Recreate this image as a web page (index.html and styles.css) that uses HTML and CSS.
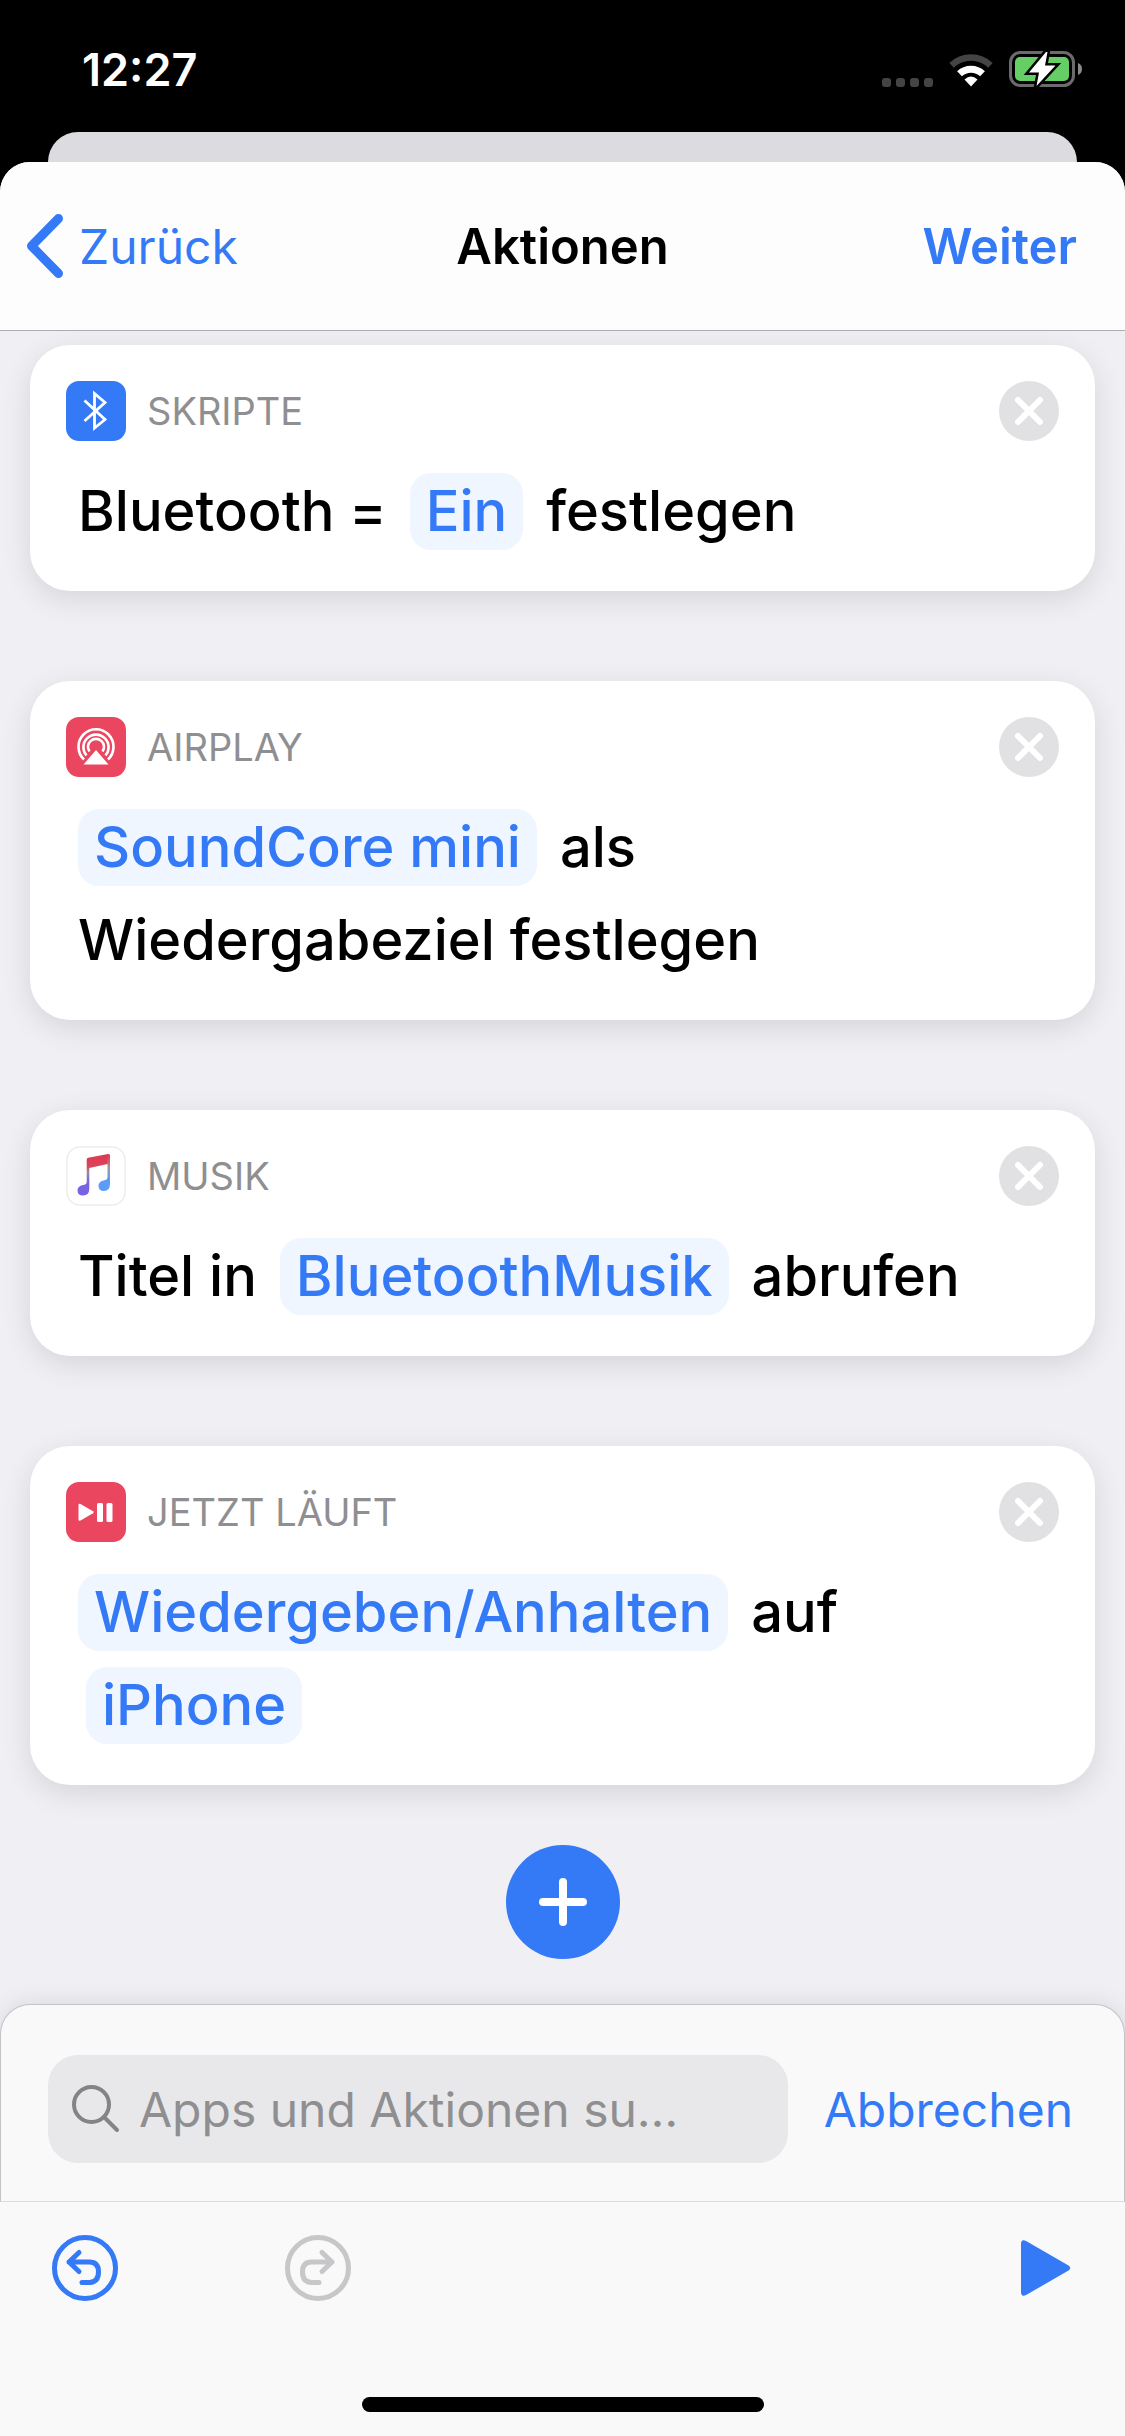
FILE: index.html
```html
<!DOCTYPE html>
<html lang="de">
<head>
<meta charset="utf-8">
<meta name="viewport" content="width=device-width, initial-scale=1">
<title>Aktionen</title>
<link rel="stylesheet" href="styles.css">
</head>
<body>
<div class="screen">
  <header class="status">
    <time class="clock">12:27</time>
    <div class="indicators">
      <svg class="signal" viewBox="0 0 51 9" aria-hidden="true"><rect width="9" height="9" rx="3"/><rect x="14" width="9" height="9" rx="3"/><rect x="28" width="9" height="9" rx="3"/><rect x="42" width="9" height="9" rx="3"/></svg>
      <svg class="wifi" viewBox="0 0 44 34" aria-hidden="true">
        <path d="M2.600 12.400A28 28 0 0 1 41.400 12.400" fill="none" stroke="#444" stroke-width="6.500"/>
        <path d="M10.500 20.800A16.800 16.800 0 0 1 33.500 20.800" fill="none" stroke="#fff" stroke-width="7"/>
        <path d="M15.500 26.500Q22 20.500 28.500 26.500L22 33.500Z" fill="#fff"/>
      </svg>
      <svg class="battery" viewBox="0 0 74 36" aria-hidden="true">
        <rect x="1.500" y="1.500" width="63" height="33" rx="10" fill="none" stroke="#6b6b6b" stroke-width="3"/>
        <path d="M69 12q4 1.500 4 6t-4 6z" fill="#8a8a8a"/>
        <rect x="6" y="6" width="54" height="24" rx="5" fill="#65cf66"/>
        <path d="M37 1L20 21.500H30L27.500 35L46.500 14.500H36L38.500 1Z" fill="#fff" stroke="#000" stroke-width="5" paint-order="stroke"/>
      </svg>
    </div>
  </header>

  <div class="behind"></div>

  <main class="sheet">
    <nav class="bar">
      <a class="back" href="#"><svg viewBox="0 0 36 64" aria-hidden="true"><path d="M31.500 4.500L4.500 32L31.500 59.500" fill="none" stroke="currentColor" stroke-width="9" stroke-linecap="round" stroke-linejoin="round"/></svg>Zurück</a>
      <h1 class="title">Aktionen</h1>
      <a class="next" href="#">Weiter</a>
    </nav>

    <div class="actions">
      <section class="card">
        <header class="card-head">
          <svg class="app" viewBox="0 0 60 60" aria-hidden="true"><rect width="60" height="60" rx="13" fill="#3479f6"/><path d="M18.500 19.500L39 38.500L28.500 47V12.500L39 21.500L18.500 40" fill="none" stroke="#fff" stroke-width="2.800"/></svg>
          <h2 class="app-name">SKRIPTE</h2>
          <button class="remove" type="button" aria-label="Entfernen"><svg viewBox="0 0 60 60"><path d="M19 19L41 41M41 19L19 41"/></svg></button>
        </header>
        <p class="sentence">Bluetooth = <button class="chip" type="button">Ein</button> festlegen</p>
      </section>

      <section class="card">
        <header class="card-head">
          <svg class="app" viewBox="0 0 60 60" aria-hidden="true"><rect width="60" height="60" rx="13" fill="#eb4660"/><g fill="none" stroke="#fff" stroke-width="2.600"><path d="M18 42.500A17.500 17.500 0 1 1 42 42.500"/><path d="M20.500 38.500A12.600 12.600 0 1 1 39.500 38.500"/><path d="M23.500 34.500A8 8 0 1 1 36.500 34.500"/></g><path d="M30 33L42.500 47.500H17.500Z" fill="#fff" stroke="#eb4660" stroke-width="2" paint-order="stroke"/></svg>
          <h2 class="app-name">AIRPLAY</h2>
          <button class="remove" type="button" aria-label="Entfernen"><svg viewBox="0 0 60 60"><path d="M19 19L41 41M41 19L19 41"/></svg></button>
        </header>
        <p class="sentence"><button class="chip chip-lead" type="button">SoundCore mini</button> als Wiedergabeziel festlegen</p>
      </section>

      <section class="card">
        <header class="card-head">
          <svg class="app" viewBox="0 0 60 60" aria-hidden="true"><defs><linearGradient id="note" x1="0" y1="0" x2="0" y2="1"><stop offset="0" stop-color="#e0384f"/><stop offset=".3" stop-color="#d9455c"/><stop offset=".45" stop-color="#a08a98"/><stop offset=".65" stop-color="#7a62e4"/><stop offset="1" stop-color="#7a62e4"/></linearGradient><linearGradient id="tail" x1="0" y1="0" x2="0" y2="1"><stop offset="0" stop-color="#e0384f"/><stop offset=".35" stop-color="#a9949c"/><stop offset=".65" stop-color="#5b9cf8"/><stop offset="1" stop-color="#5b9cf8"/></linearGradient></defs><rect x="1" y="1" width="58" height="58" rx="13" fill="#fff" stroke="#ededef" stroke-width="1.500"/><path d="M20.700 13.500Q20.700 12 22.200 11.700L42 8Q44 7.700 44 9.500V17.500L23.300 22V42.500Q23.300 49.500 17 49.500Q11.500 49.500 11.500 44.500Q11.500 40 17 39Q20.700 38.500 20.700 36Z" fill="url(#note)"/><path d="M41.500 10L44 9V37.500Q44 45 38 45Q32.500 45 32.500 40Q32.500 35.500 37.500 34.500Q41.500 34 41.500 31Z" fill="url(#tail)"/></svg>
          <h2 class="app-name">MUSIK</h2>
          <button class="remove" type="button" aria-label="Entfernen"><svg viewBox="0 0 60 60"><path d="M19 19L41 41M41 19L19 41"/></svg></button>
        </header>
        <p class="sentence">Titel in <button class="chip" type="button">BluetoothMusik</button> abrufen</p>
      </section>

      <section class="card">
        <header class="card-head">
          <svg class="app" viewBox="0 0 60 60" aria-hidden="true"><rect width="60" height="60" rx="13" fill="#eb4660"/><g fill="#fff"><path d="M12.500 23Q12.500 21 14.500 22L27 29.200Q28.500 30.200 27 31.200L14.500 38.500Q12.500 39.500 12.500 37.500Z"/><rect x="31" y="21" width="6" height="19" rx="1.500"/><rect x="40.500" y="21" width="6" height="19" rx="1.500"/></g></svg>
          <h2 class="app-name">JETZT LÄUFT</h2>
          <button class="remove" type="button" aria-label="Entfernen"><svg viewBox="0 0 60 60"><path d="M19 19L41 41M41 19L19 41"/></svg></button>
        </header>
        <p class="sentence"><button class="chip chip-lead" type="button">Wiedergeben/Anhalten</button> auf <button class="chip" type="button">iPhone</button></p>
      </section>

      <button class="add" type="button" aria-label="Aktion hinzufügen"><svg viewBox="0 0 114 114"><path d="M57 37V77M37 57H77" stroke="#fff" stroke-width="8" stroke-linecap="round"/></svg></button>
    </div>

    <footer class="dock">
      <form class="finder">
        <label class="field">
          <svg viewBox="0 0 48 48" aria-hidden="true"><circle cx="19.500" cy="19.500" r="17.500"/><path d="M32 32L45 45"/></svg>
          <input type="search" placeholder="Apps und Aktionen su…" aria-label="Apps und Aktionen suchen">
        </label>
        <button class="cancel" type="button">Abbrechen</button>
      </form>
      <div class="toolbar">
        <div class="tools">
          <div class="history">
            <button class="tool" type="button" aria-label="Widerrufen"><svg viewBox="0 0 66 66"><circle cx="33" cy="33" r="30.500"/><path d="M27 17.500L17 27L27 36.500M17 27H37.500Q46.500 27 46.500 37T37.500 47.500H30"/></svg></button>
            <button class="tool" type="button" aria-label="Wiederholen" disabled><svg viewBox="0 0 66 66"><circle cx="33" cy="33" r="30.500"/><path d="M37 17.500L47 27L37 36.500M47 27H26.500Q17.500 27 17.500 37T26.500 47.500H34"/></svg></button>
          </div>
          <button class="play" type="button" aria-label="Ausführen"><svg viewBox="0 0 50 56"><path d="M0 4Q0-1.500 5.500 1.200L47.500 25.500Q51 28 47.500 30.500L5.500 54.800Q0 57.500 0 52Z" fill="currentColor"/></svg></button>
        </div>
        <div class="home"></div>
      </div>
    </footer>
  </main>
</div>
</body>
</html>
```
FILE: styles.css
```css
* {
  box-sizing: border-box;
}

:root {
  --blue: #3479f6;
  --grey: #8f8f92;
}

body {
  margin: 0;
  background: #000;
  font-family: Inter, "Liberation Sans", sans-serif;
  font-size: 48px;
}

button {
  padding: 0;
  border: 0;
  background: none;
  color: var(--blue);
  font: inherit;
}

svg {
  display: block;
}

.screen {
  display: flex;
  flex-direction: column;
  min-height: 100vh;
}

/* status bar */
.status {
  display: flex;
  justify-content: space-between;
  align-items: center;
  height: 132px;
  padding: 6px 42px 0 82px;
  color: #fff;
}

.clock {
  font-size: 45px;
  font-weight: 600;
}

.indicators {
  display: flex;
  align-items: flex-end;
  gap: 16px;
}

.signal {
  width: 51px;
  height: 9px;
  fill: #444;
}

.wifi {
  width: 44px;
  height: 34px;
}

.battery {
  width: 74px;
  height: 36px;
}

.behind {
  height: 60px;
  margin: 0 48px -30px;
  border-radius: 30px 30px 0 0;
  background: #dcdbdf;
}

.sheet {
  display: flex;
  flex: 1;
  flex-direction: column;
  overflow: hidden;
  border-radius: 30px 30px 0 0;
  background: #efeff4;
}

/* navigation bar */
.bar {
  display: grid;
  grid-template-columns: 1fr auto 1fr;
  align-items: center;
  height: 169px;
  padding: 0 27px;
  border-bottom: 1px solid #aeaeb2;
  background: #fdfdfd;
}

.bar a {
  color: var(--blue);
  text-decoration: none;
}

.back {
  display: flex;
  align-items: center;
  gap: 16px;
}

.back svg {
  width: 36px;
  height: 64px;
}

.title {
  margin: 0;
  font-size: 49px;
  font-weight: 600;
}

.bar .next {
  justify-self: end;
  padding-right: 21px;
  font-size: 49px;
  font-weight: 600;
}

/* action cards */
.actions {
  display: flex;
  flex: 1;
  flex-direction: column;
  gap: 90px;
  padding: 14px 30px 45px;
}

.card {
  padding: 36px 36px 33px;
  border-radius: 40px;
  background: #fff;
  box-shadow: 0 8px 30px rgba(0, 0, 0, .11);
}

.card-head {
  display: flex;
  align-items: center;
  gap: 21px;
  margin-bottom: 24px;
}

.app {
  width: 60px;
  height: 60px;
}

.app-name {
  flex: 1;
  margin: 0;
  color: var(--grey);
  font-size: 38px;
  font-weight: 400;
}

.remove {
  width: 60px;
  height: 60px;
  border-radius: 50%;
  background: #e1e1e4;
}

.remove path {
  stroke: #fff;
  stroke-width: 6;
  stroke-linecap: round;
}

.sentence {
  margin: 0;
  padding: 0 12px;
  font-size: 56px;
  font-weight: 500;
  line-height: 93px;
}

.chip {
  margin: 0 8px;
  padding: 0 16px;
  border-radius: 21px;
  background: #f0f6ff;
  line-height: 77px;
}

.chip-lead {
  margin-left: 0;
}

.add {
  align-self: center;
  width: 114px;
  height: 114px;
  margin-top: -30px;
  border-radius: 50%;
  background: var(--blue);
}

/* search panel and toolbar */
.finder {
  display: flex;
  align-items: center;
  gap: 36px;
  padding: 50px 51px 38px 47px;
  border: 1px solid #c4c4c6;
  border-bottom-color: #dcdcde;
  border-radius: 30px 30px 0 0;
  background: #f9f9f9;
  box-shadow: 0 0 24px rgba(0, 0, 0, .1);
}

.field {
  display: flex;
  flex: 1;
  align-items: center;
  gap: 19px;
  min-width: 0;
  height: 108px;
  padding: 0 24px;
  border-radius: 30px;
  background: #e8e8ea;
}

.field svg {
  flex: none;
  width: 48px;
  height: 48px;
  fill: none;
  stroke: #848487;
  stroke-width: 4;
  stroke-linecap: round;
}

.field input {
  flex: 1;
  min-width: 0;
  padding: 0;
  border: 0;
  background: none;
  font: inherit;
}

.field input::placeholder {
  color: var(--grey);
}

.toolbar {
  position: relative;
  padding: 33px 0 24px;
  background: #f9f9f9;
}

.tools {
  display: flex;
  justify-content: space-between;
  align-items: center;
  padding: 0 54px 0 52px;
}

.history {
  display: flex;
  gap: 167px;
}

.tool svg {
  width: 66px;
  height: 66px;
  fill: none;
  stroke: currentColor;
  stroke-width: 5;
  stroke-linecap: round;
  stroke-linejoin: round;
}

.tool:disabled {
  color: #c7c7c9;
}

.play svg {
  width: 50px;
  height: 56px;
}

.home {
  width: 402px;
  max-width: 36%;
  height: 15px;
  margin: 96px auto 0;
  border-radius: 8px;
  background: #000;
}
```
